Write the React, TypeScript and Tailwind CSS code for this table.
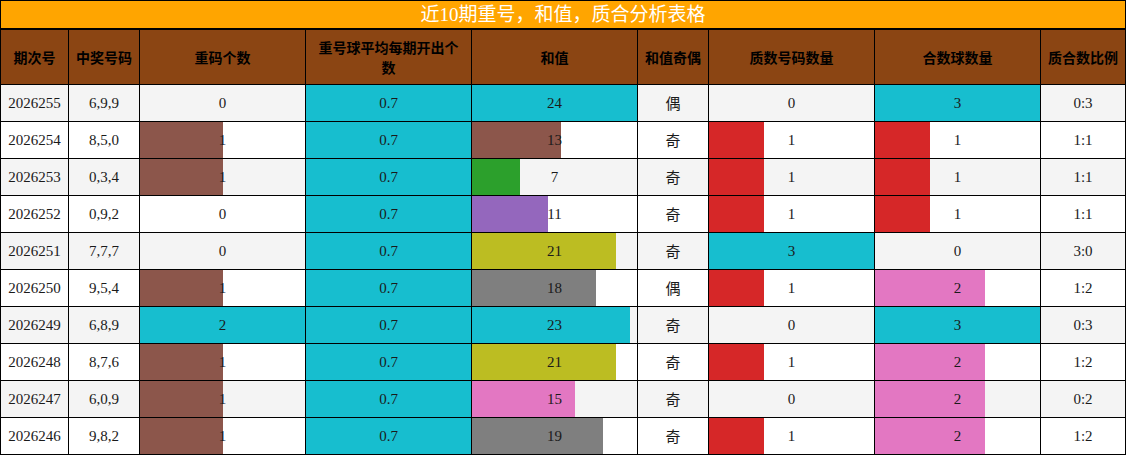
import React from "react";

type Bar = { v: string; color?: string; pct?: number };
type Row = {
  id: string;
  nums: string;
  rep: Bar;
  avg: Bar;
  sum: Bar;
  parity: string;
  prime: Bar;
  comp: Bar;
  ratio: string;
};

const BROWN = "#8c564b";
const TEAL = "#17becf";
const GREEN = "#2ca02c";
const PURPLE = "#9467bd";
const OLIVE = "#bcbd22";
const GRAY = "#7f7f7f";
const PINK = "#e377c2";
const RED = "#d62728";

const rep = (n: number): Bar =>
  n === 0 ? { v: "0" } : n === 1 ? { v: "1", color: BROWN, pct: 50 } : { v: "2", color: TEAL, pct: 100 };
const cnt = (n: number): Bar =>
  n === 0
    ? { v: "0" }
    : n === 1
    ? { v: "1", color: RED, pct: 100 / 3 }
    : n === 2
    ? { v: "2", color: PINK, pct: 200 / 3 }
    : { v: "3", color: TEAL, pct: 100 };
const sum = (n: number, color: string): Bar => ({ v: String(n), color, pct: (n / 24) * 100 });
const avg: Bar = { v: "0.7", color: TEAL, pct: 100 };

const rows: Row[] = [
  { id: "2026255", nums: "6,9,9", rep: rep(0), avg, sum: sum(24, TEAL), parity: "偶", prime: cnt(0), comp: cnt(3), ratio: "0:3" },
  { id: "2026254", nums: "8,5,0", rep: rep(1), avg, sum: sum(13, BROWN), parity: "奇", prime: cnt(1), comp: { v: "1", color: RED, pct: 100 / 3 }, ratio: "1:1" },
  { id: "2026253", nums: "0,3,4", rep: rep(1), avg, sum: sum(7, GREEN), parity: "奇", prime: cnt(1), comp: { v: "1", color: RED, pct: 100 / 3 }, ratio: "1:1" },
  { id: "2026252", nums: "0,9,2", rep: rep(0), avg, sum: sum(11, PURPLE), parity: "奇", prime: cnt(1), comp: { v: "1", color: RED, pct: 100 / 3 }, ratio: "1:1" },
  { id: "2026251", nums: "7,7,7", rep: rep(0), avg, sum: sum(21, OLIVE), parity: "奇", prime: cnt(3), comp: cnt(0), ratio: "3:0" },
  { id: "2026250", nums: "9,5,4", rep: rep(1), avg, sum: sum(18, GRAY), parity: "偶", prime: cnt(1), comp: cnt(2), ratio: "1:2" },
  { id: "2026249", nums: "6,8,9", rep: rep(2), avg, sum: sum(23, TEAL), parity: "奇", prime: cnt(0), comp: cnt(3), ratio: "0:3" },
  { id: "2026248", nums: "8,7,6", rep: rep(1), avg, sum: sum(21, OLIVE), parity: "奇", prime: cnt(1), comp: cnt(2), ratio: "1:2" },
  { id: "2026247", nums: "6,0,9", rep: rep(1), avg, sum: sum(15, PINK), parity: "奇", prime: cnt(0), comp: cnt(2), ratio: "0:2" },
  { id: "2026246", nums: "9,8,2", rep: rep(1), avg, sum: sum(19, GRAY), parity: "奇", prime: cnt(1), comp: cnt(2), ratio: "1:2" },
];

const headers = [
  "期次号",
  "中奖号码",
  "重码个数",
  "重号球平均每期开出个数",
  "和值",
  "和值奇偶",
  "质数号码数量",
  "合数球数量",
  "质合数比例",
];

const cellBase = "border-r border-b border-black flex items-center justify-center";

function BarCell({ b }: { b: Bar }) {
  return (
    <div className={`${cellBase} relative`}>
      {b.color && (
        <div
          className="absolute left-0 top-0 bottom-0"
          style={{ width: `${b.pct}%`, backgroundColor: b.color }}
        />
      )}
      <span className="relative">{b.v}</span>
    </div>
  );
}

export default function App() {
  return (
    <div
      className="w-[1126px] h-[455px] bg-white text-[15px] text-[#1a1a1a]"
      style={{ fontFamily: '"Liberation Serif", "Noto Sans CJK SC", serif' }}
    >
      <div className="grid grid-cols-[68px_71px_166px_166px_166px_71px_166px_166px_85px] grid-rows-[29px_55px_repeat(10,37px)] border-l border-t border-black">
        <div
          className="col-span-9 bg-[#ffa500] border-r border-b-2 border-black flex items-center justify-center text-white text-[19px] leading-none"
          style={{ fontFamily: '"Liberation Serif", "Noto Sans CJK SC", serif' }}
        >
          近10期重号，和值，质合分析表格
        </div>
        {headers.map((h) => (
          <div
            key={h}
            className={`${cellBase} bg-[#8b4513] text-black font-bold text-[14px] leading-[20px] text-center px-[6px]`}
            style={{ fontFamily: '"Noto Sans CJK SC", sans-serif' }}
          >
            {h}
          </div>
        ))}
        {rows.map((r, i) => {
          const bg = i % 2 === 0 ? "bg-[#f4f4f4]" : "bg-white";
          return (
            <div key={r.id} className={`contents`}>
              <div className={`${cellBase} ${bg}`}>{r.id}</div>
              <div className={`${cellBase} ${bg}`}>{r.nums}</div>
              <div className={`${cellBase} ${bg} relative`}>
                {r.rep.color && (
                  <div className="absolute left-0 top-0 bottom-0" style={{ width: `${r.rep.pct}%`, backgroundColor: r.rep.color }} />
                )}
                <span className="relative">{r.rep.v}</span>
              </div>
              <div className={`${bg} contents`}>
                <BarCell b={r.avg} />
              </div>
              <div className={`${cellBase} ${bg} relative`}>
                {r.sum.color && (
                  <div className="absolute left-0 top-0 bottom-0" style={{ width: `${r.sum.pct}%`, backgroundColor: r.sum.color }} />
                )}
                <span className="relative">{r.sum.v}</span>
              </div>
              <div className={`${cellBase} ${bg}`} style={{ fontFamily: '"Noto Sans CJK SC", sans-serif' }}>
                {r.parity}
              </div>
              <div className={`${cellBase} ${bg} relative`}>
                {r.prime.color && (
                  <div className="absolute left-0 top-0 bottom-0" style={{ width: `${r.prime.pct}%`, backgroundColor: r.prime.color }} />
                )}
                <span className="relative">{r.prime.v}</span>
              </div>
              <div className={`${cellBase} ${bg} relative`}>
                {r.comp.color && (
                  <div className="absolute left-0 top-0 bottom-0" style={{ width: `${r.comp.pct}%`, backgroundColor: r.comp.color }} />
                )}
                <span className="relative">{r.comp.v}</span>
              </div>
              <div className={`${cellBase} ${bg}`}>{r.ratio}</div>
            </div>
          );
        })}
      </div>
    </div>
  );
}
